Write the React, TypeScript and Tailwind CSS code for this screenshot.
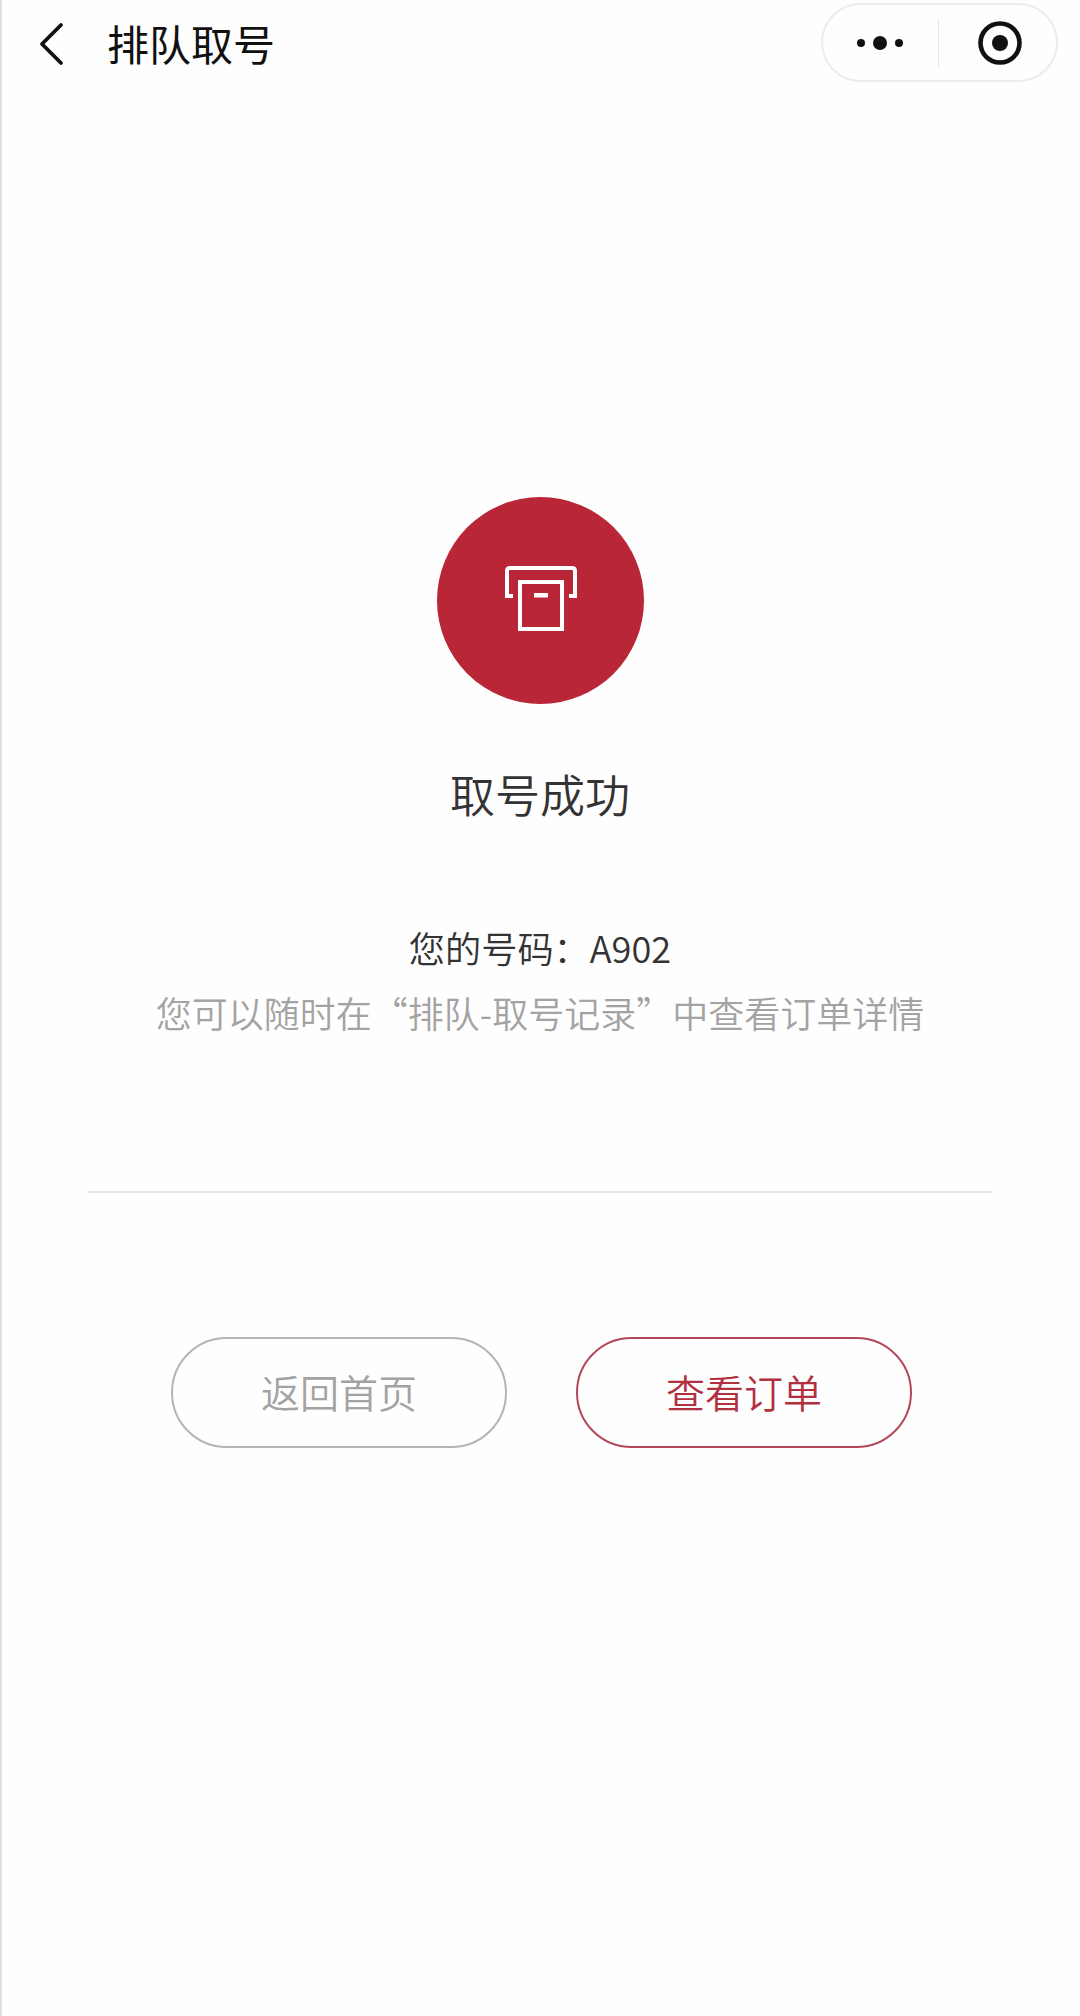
export default function App() {
  const font = { fontFamily: '"Noto Sans CJK SC", "Noto Sans", sans-serif' };
  return (
    <div style={font} className="w-[1080px] h-[2016px] bg-[#fefefe] shadow-[inset_2px_0_0_#dedede] flex flex-col items-center overflow-hidden">
      <header className="w-full h-[86px] flex items-center shrink-0 pt-[2px]">
        <svg className="ml-[38px] shrink-0" width="28" height="44" viewBox="0 0 28 44" fill="none">
          <path d="M23 3 L4 22 L23 41" stroke="#111" strokeWidth="3.8" strokeLinecap="round" strokeLinejoin="round" />
        </svg>
        <h1 className="ml-[41px] mb-[2px] text-[42px] leading-[50px] font-normal text-[#111] whitespace-nowrap">排队取号</h1>
        <div className="ml-auto mr-[22px] mb-[3px] w-[237px] h-[79px] rounded-full border-2 border-[#ececec] flex items-center shrink-0">
          <svg className="ml-[30px] shrink-0" width="56" height="16" viewBox="0 0 56 16">
            <circle cx="8" cy="8" r="4" fill="#111" />
            <circle cx="27" cy="8" r="7" fill="#111" />
            <circle cx="46" cy="8" r="4" fill="#111" />
          </svg>
          <div className="ml-[29px] w-px h-[48px] bg-[#e4e4e4] shrink-0" />
          <svg className="ml-[38px] mt-[1px] shrink-0" width="46" height="46" viewBox="0 0 46 46" fill="none">
            <circle cx="23" cy="23" r="19.5" stroke="#111" strokeWidth="4.6" />
            <circle cx="23" cy="23" r="8" fill="#111" />
          </svg>
        </div>
      </header>

      <div className="mt-[411px] w-[207px] h-[207px] rounded-full bg-[#b92637] flex items-center justify-center shrink-0">
        <svg width="74" height="66" viewBox="0 0 74 66" fill="none" className="mt-[-3px] ml-[1px]">
          <path d="M9 30 H3 V5 Q3 2 6 2 H68 Q71 2 71 5 V30 H65" stroke="#fff" strokeWidth="4" />
          <rect x="16" y="16" width="42" height="47" stroke="#fff" strokeWidth="4" />
          <rect x="30" y="27" width="14" height="4.5" fill="#fff" />
        </svg>
      </div>

      <h2 className="mt-[60px] text-[45px] leading-[60px] font-[350] text-[#333] whitespace-nowrap">取号成功</h2>

      <p className="mt-[98px] text-[36.2px] leading-[50px] font-[350] text-[#333] whitespace-nowrap">您的号码：A902</p>
      <p className="mt-[15px] text-[36px] leading-[50px] font-[350] text-[#a3a3a3] whitespace-nowrap">您可以随时在“排队-取号记录”中查看订单详情</p>

      <div className="mt-[154px] w-[906px] h-[2px] bg-[#e8e8e8] shrink-0" />

      <div className="mt-[144px] flex gap-[69px] ml-[3px]">
        <button className="w-[336px] h-[111px] pb-[2px] rounded-full border-2 border-[#b4b4b4] text-[39px] font-[350] text-[#a3a3a3]">返回首页</button>
        <button className="w-[336px] h-[111px] pb-[2px] rounded-full border-2 border-[#b3475a] text-[39px] font-[350] text-[#b23040]">查看订单</button>
      </div>
    </div>
  );
}
